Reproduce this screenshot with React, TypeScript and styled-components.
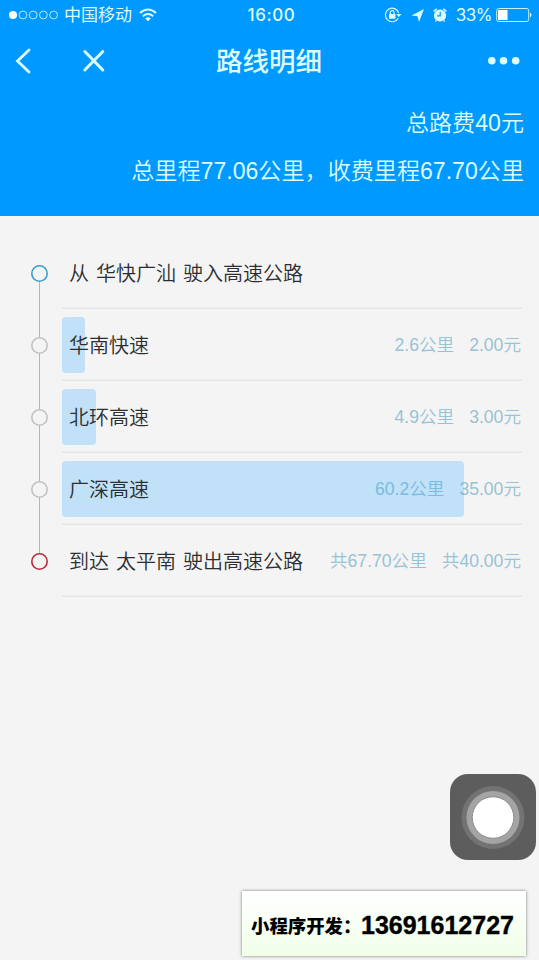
import React from "react";
import styled, { createGlobalStyle } from "styled-components";

const Global = createGlobalStyle`
  * { box-sizing: border-box; }
  body { margin: 0; background: #f4f4f4; font-family: Inter, "Noto Sans CJK SC", sans-serif; }
`;

const Screen = styled.div`
  position: relative;
  width: 539px;
  height: 960px;
  overflow: hidden;
  background: #f4f4f4;
`;

const Header = styled.header`
  height: 216px;
  background: #0099ff;
  color: #dcfcff;
`;

const StatusBar = styled.div`
  display: grid;
  grid-template-columns: 1fr 60px 1fr;
  align-items: center;
  height: 30px;
  padding: 0 7px 0 8px;
  font-size: 17px;
  line-height: 30px;
`;

const StatusSide = styled.div<{ $end?: boolean }>`
  display: flex;
  align-items: center;
  justify-content: ${(p) => (p.$end ? "flex-end" : "flex-start")};
  svg { flex: none; }
`;

const Carrier = styled.span`
  margin: 0 7px 0 6px;
`;

const Clock = styled.span`
  padding-left: 3px;
  font-size: 17px;
  font-weight: 500;
  text-align: center;
  white-space: nowrap;
  letter-spacing: 0.6px;
`;

const Percent = styled.span`
  margin: 0 4px 0 9px;
  font-size: 17px;
  letter-spacing: -0.5px;
`;

const NavBar = styled.nav`
  display: grid;
  grid-template-columns: 1fr auto 1fr;
  align-items: center;
  height: 62px;
  padding: 0 18px 0 12px;
`;

const NavSide = styled.div<{ $end?: boolean }>`
  display: flex;
  gap: 48px;
  justify-content: ${(p) => (p.$end ? "flex-end" : "flex-start")};
`;

const Title = styled.h1`
  margin: 0 0 0 5px;
  font-size: 26.5px;
  font-weight: 500;
  line-height: 60px;
`;

const Summary = styled.div`
  display: flex;
  flex-direction: column;
  align-items: flex-end;
  padding: 8px 15px 0 0;
`;

const SummaryLine = styled.p`
  margin: 0;
  font-family: "Liberation Sans", "Noto Sans CJK SC", sans-serif;
  font-size: 23.1px;
  font-weight: 350;
  line-height: 47.5px;
  white-space: nowrap;
`;

const Route = styled.main`
  padding: 21px 17px 0 31px;
`;

const Stop = styled.div`
  display: grid;
  grid-template-columns: 31px 1fr;
  height: 72px;
`;

const Track = styled.div`
  display: flex;
  flex-direction: column;
  align-items: center;
  width: 17px;
`;

const Segment = styled.i<{ $hidden?: boolean }>`
  flex: 1;
  width: 1.5px;
  background: ${(p) => (p.$hidden ? "transparent" : "#b5b5b5")};
`;

const Dot = styled.i<{ $color: string }>`
  width: 17px;
  height: 17px;
  border-radius: 50%;
  box-shadow: inset 0 0 0 1.6px ${(p) => p.$color};
`;

const Leg = styled.div`
  position: relative;
  display: flex;
  align-items: center;
  justify-content: space-between;
  padding: 1px 1px 0 7px;
  box-shadow: inset 0 -1.5px #e5e5e6;
  font-family: "Liberation Sans", "Noto Sans CJK SC", sans-serif;
  font-weight: 350;
  white-space: nowrap;
`;

const Label = styled.span`
  position: relative;
  z-index: 1;
  font-size: 20px;
  line-height: 30px;
  color: #2c2e31;
  word-spacing: 1.5px;
`;

const Costs = styled.span`
  display: flex;
  gap: 15px;
  padding-bottom: 2px;
  font-size: 17.6px;
  line-height: 30px;
  color: #97c3d6;
`;

const Share = styled.i<{ $width: number }>`
  position: absolute;
  left: 0;
  top: 8px;
  width: ${(p) => p.$width}px;
  height: 56px;
  border-radius: 4px;
  background: rgba(35, 168, 255, 0.25);
`;

const AssistiveTouch = styled.button`
  position: absolute;
  left: 450px;
  top: 774px;
  width: 86px;
  height: 86px;
  padding: 0;
  border: 0;
  border-radius: 18px;
  background: #5d5d5d;
  svg { display: block; }
`;

const Notice = styled.aside`
  position: absolute;
  left: 242px;
  top: 891px;
  display: flex;
  align-items: center;
  width: 284px;
  height: 65px;
  padding: 3px 0 0 9px;
  background: linear-gradient(#fff, #f0ffe8);
  box-shadow: 0 0 3px #777;
  color: #000;
  white-space: nowrap;
`;

const NoticeLabel = styled.span`
  width: 110px;
  font: 900 18.4px "Noto Sans CJK SC", sans-serif;
`;

const Phone = styled.span`
  font: 700 25px "Liberation Sans", sans-serif;
  -webkit-text-stroke: 0.4px #000;
`;

const stops = [
  { label: "从 华快广汕 驶入高速公路", color: "#3b9fc8", share: 0, costs: [] },
  { label: "华南快速", color: "#c2c2c2", share: 23, costs: ["2.6公里", "2.00元"] },
  { label: "北环高速", color: "#c2c2c2", share: 34, costs: ["4.9公里", "3.00元"] },
  { label: "广深高速", color: "#c2c2c2", share: 402, costs: ["60.2公里", "35.00元"] },
  { label: "到达 太平南 驶出高速公路", color: "#b92b3b", share: 0, costs: ["共67.70公里", "共40.00元"] },
];

const Signal = () => (
  <svg width="50" height="12" fill="none" stroke="currentColor">
    <circle cx="5" cy="6" r="4" fill="#fff" stroke="none" />
    {[15, 25.2, 35.4, 45.6].map((x) => <circle key={x} cx={x} cy="6" r="3.9" strokeWidth=".8" />)}
  </svg>
);

const Wifi = () => (
  <svg width="18" height="14" viewBox="0 0 18 14" fill="none" stroke="currentColor" strokeWidth="1.9">
    <path d="M1 5Q9-2 17 5M3.8 8.2Q9 3.9 14.2 8.2" />
    <path d="M6.2 10.4Q9 8 11.8 10.4L9 13.2Z" fill="currentColor" stroke="none" />
  </svg>
);

const StatusIcons = () => (
  <svg width="63" height="18" viewBox="0 0 63 18" fill="none" stroke="currentColor">
    <path d="M14.2 12.2A6.8 6.8 0 1 1 14.7 7" strokeWidth="1.1" />
    <path d="M12.1 8H17.5L14.8 11Z" fill="currentColor" stroke="none" />
    <rect x="5" y="8" width="6.4" height="4.7" fill="currentColor" stroke="none" />
    <path d="M6.3 8V6.5a1.9 1.9 0 0 1 3.8 0V8" strokeWidth="1.1" />
    <path d="M27.5 9.6 40 3 35 16 33.5 10.2Z" fill="currentColor" stroke="none" />
    <circle cx="56" cy="9.5" r="6.1" fill="currentColor" stroke="none" />
    <path d="M50 5 52.3 3.2M62 5 59.7 3.2" strokeWidth="1.5" strokeLinecap="round" />
    <path d="M52.3 14.3 51.4 15.6M59.7 14.3 60.6 15.6" strokeWidth="1.2" />
    <path d="M56.2 5.7V9.9H53" stroke="#0099ff" strokeWidth="1.2" />
  </svg>
);

const Battery = () => (
  <svg width="36" height="16" fill="none" stroke="currentColor">
    <rect x=".7" y="1.5" width="32" height="13" rx="2" strokeWidth=".9" />
    <path d="M2 3H11.5V13H2Z" fill="#fff" stroke="none" />
    <path d="M34 5.5Q37 8 34 10.5Z" fill="currentColor" stroke="none" />
  </svg>
);

export default function App() {
  return (
    <Screen>
      <Global />
      <Header>
        <StatusBar>
          <StatusSide><Signal /><Carrier>中国移动</Carrier><Wifi /></StatusSide>
          <Clock>16:00</Clock>
          <StatusSide $end><StatusIcons /><Percent>33%</Percent><Battery /></StatusSide>
        </StatusBar>
        <NavBar>
          <NavSide>
            <svg width="22" height="26" fill="none" stroke="currentColor" strokeWidth="2.8" strokeLinecap="round">
              <path d="M17 2 5.5 13 17 24" />
            </svg>
            <svg width="24" height="26" fill="none" stroke="currentColor" strokeWidth="3" strokeLinecap="round">
              <path d="M2.8 3.5 20.8 22M20.8 3.5 2.8 22" />
            </svg>
          </NavSide>
          <Title>路线明细</Title>
          <NavSide $end>
            <svg width="34" height="10" fill="currentColor">
              <circle cx="4.8" cy="4.8" r="3.8" /><circle cx="16.5" cy="4.8" r="3.8" /><circle cx="28.7" cy="4.8" r="3.8" />
            </svg>
          </NavSide>
        </NavBar>
        <Summary>
          <SummaryLine>总路费40元</SummaryLine>
          <SummaryLine>总里程77.06公里，收费里程67.70公里</SummaryLine>
        </Summary>
      </Header>
      <Route>
        {stops.map((s, i) => (
          <Stop key={s.label}>
            <Track>
              <Segment $hidden={i === 0} />
              <Dot $color={s.color} />
              <Segment $hidden={i === stops.length - 1} />
            </Track>
            <Leg>
              <Label>{s.label}</Label>
              <Costs>{s.costs.map((c) => <span key={c}>{c}</span>)}</Costs>
              {s.share > 0 && <Share $width={s.share} />}
            </Leg>
          </Stop>
        ))}
      </Route>
      <AssistiveTouch aria-label="AssistiveTouch">
        <svg width="86" height="86">
          <circle cx="43" cy="43.5" r="31.5" fill="#737373" />
          <circle cx="43" cy="43.5" r="26.5" fill="#a4a4a4" />
          <circle cx="43" cy="43.5" r="20.8" fill="#fff" stroke="#8b8b8b" strokeWidth="1" />
        </svg>
      </AssistiveTouch>
      <Notice>
        <NoticeLabel>小程序开发：</NoticeLabel>
        <Phone>13691612727</Phone>
      </Notice>
    </Screen>
  );
}
